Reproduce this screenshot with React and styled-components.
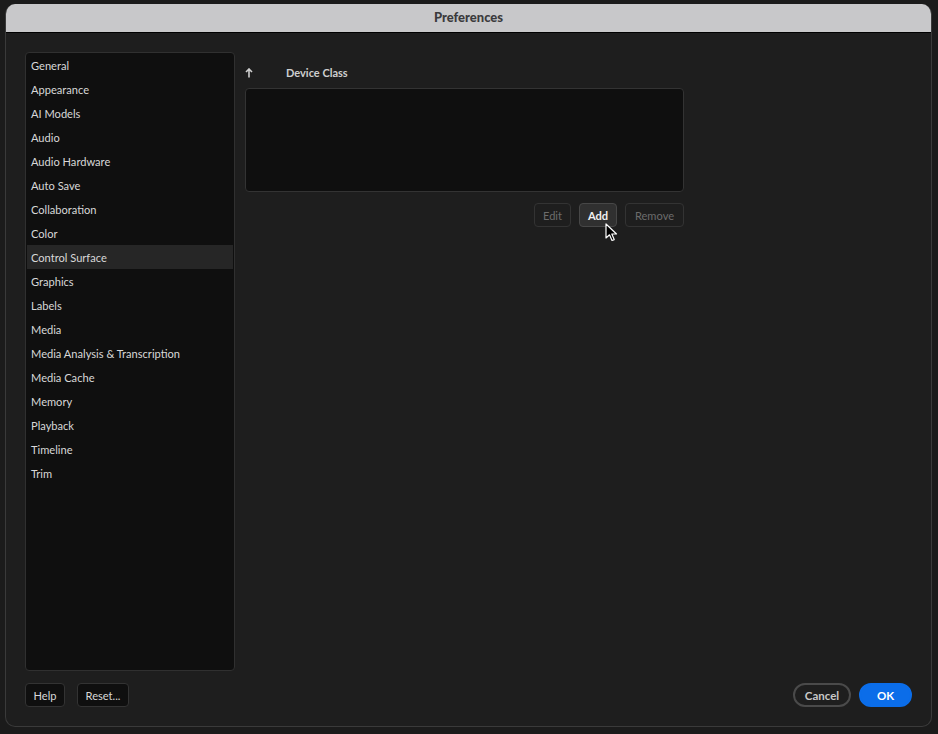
import React from "react";
import styled, { createGlobalStyle } from "styled-components";

const GlobalStyle = createGlobalStyle`
  html, body {
    margin: 0;
    padding: 0;
    background: #1b1b1b;
    font-family: "Lato", "Noto Sans", "Liberation Sans", sans-serif;
  }
`;

const Screen = styled.div`
  width: 938px;
  height: 734px;
  padding: 4px 6px 7px 5px;
  box-sizing: border-box;
  position: relative;
`;

const Window = styled.div`
  height: 100%;
  display: flex;
  flex-direction: column;
  background: #1e1e1e;
  border: 1px solid #3a3a3a;
  border-top: none;
  border-radius: 10px;
  overflow: hidden;
  box-sizing: border-box;
`;

const TitleBar = styled.div`
  height: 29px;
  flex: none;
  display: flex;
  align-items: center;
  justify-content: center;
  padding-bottom: 3px;
  box-sizing: border-box;
  background: #c8c8ca;
  border-bottom: 1px solid #000;
  color: #3b3b3d;
  font-size: 13px;
  font-weight: 900;
`;

const Body = styled.div`
  flex: 1;
  display: flex;
  flex-direction: column;
  padding: 19px 19px 19px 19px;
  min-height: 0;
`;

const Main = styled.div`
  flex: 1;
  display: flex;
  gap: 10px;
  min-height: 0;
`;

const Sidebar = styled.ul`
  width: 210px;
  flex: none;
  margin: 0;
  padding: 0 1px;
  list-style: none;
  background: #0f0f0f;
  border: 1px solid #303030;
  border-radius: 4px;
  box-sizing: border-box;
`;

const NavItem = styled.li`
  height: 24px;
  display: flex;
  align-items: center;
  padding-left: 4px;
  font-size: 11.1px;
  color: #d8d8d8;
  background: ${(p) => (p.$active ? "#262626" : "transparent")};
`;

const Panel = styled.div`
  width: 439px;
  display: flex;
  flex-direction: column;
`;

const ColumnHeader = styled.div`
  height: 36px;
  display: flex;
  align-items: center;
  padding-top: 5px;
  box-sizing: border-box;
`;

const SortArrow = styled.span`
  width: 41px;
  display: flex;
  align-items: center;
`;

const HeaderLabel = styled.span`
  font-size: 11px;
  font-weight: 700;
  color: #cfcfcf;
`;

const ListBox = styled.div`
  height: 104px;
  background: #0f0f0f;
  border: 1px solid #333;
  border-radius: 4px;
  box-sizing: border-box;
`;

const ButtonRow = styled.div`
  display: flex;
  justify-content: flex-end;
  gap: 8px;
  margin-top: 11px;
`;

const SmallButton = styled.button`
  height: 24px;
  padding: 0;
  width: ${(p) => p.$w}px;
  font-family: inherit;
  font-size: 11.1px;
  font-weight: ${(p) => (p.$hover ? 700 : 400)};
  color: ${(p) => (p.$disabled ? "#6c6c6c" : p.$hover ? "#f0f0f0" : "#d8d8d8")};
  background: ${(p) => (p.$hover ? "#303030" : p.$disabled ? "#1e1e1e" : "#0f0f0f")};
  border: 1px solid ${(p) => (p.$hover ? "#474747" : "#333")};
  border-radius: 4px;
  box-sizing: border-box;
`;

const Footer = styled.div`
  flex: none;
  display: flex;
  align-items: center;
  margin-top: 12px;
`;

const FooterGroup = styled.div`
  display: flex;
  margin-left: ${(p) => (p.$right ? "auto" : 0)};
  gap: ${(p) => (p.$right ? 8 : 12)}px;
`;

const PillButton = styled.button`
  height: 24px;
  padding: 0;
  font-family: inherit;
  font-size: 11.5px;
  font-weight: 700;
  border-radius: 12px;
  box-sizing: border-box;
  width: ${(p) => p.$w}px;
  color: ${(p) => (p.$primary ? "#fff" : "#c8c8c8")};
  background: ${(p) => (p.$primary ? "#0b6de9" : "transparent")};
  border: 2px solid ${(p) => (p.$primary ? "#0b6de9" : "#4a4a4a")};
`;

const Cursor = styled.svg`
  position: absolute;
  left: 605px;
  top: 223px;
`;

const sections = [
  "General",
  "Appearance",
  "AI Models",
  "Audio",
  "Audio Hardware",
  "Auto Save",
  "Collaboration",
  "Color",
  "Control Surface",
  "Graphics",
  "Labels",
  "Media",
  "Media Analysis & Transcription",
  "Media Cache",
  "Memory",
  "Playback",
  "Timeline",
  "Trim",
];

export default function App() {
  return (
    <Screen>
      <GlobalStyle />
      <Window>
        <TitleBar>Preferences</TitleBar>
        <Body>
          <Main>
            <Sidebar>
              {sections.map((s) => (
                <NavItem key={s} $active={s === "Control Surface"}>
                  {s}
                </NavItem>
              ))}
            </Sidebar>
            <Panel>
              <ColumnHeader>
                <SortArrow>
                  <svg width="8" height="10" viewBox="0 0 8 10">
                    <path d="M4 1 L4 9.5 M1 4 L4 1 L7 4" stroke="#d0d0d0" strokeWidth="1.6" fill="none" />
                  </svg>
                </SortArrow>
                <HeaderLabel>Device Class</HeaderLabel>
              </ColumnHeader>
              <ListBox />
              <ButtonRow>
                <SmallButton $disabled $w={37}>Edit</SmallButton>
                <SmallButton $hover $w={38}>Add</SmallButton>
                <SmallButton $disabled $w={59}>Remove</SmallButton>
              </ButtonRow>
            </Panel>
          </Main>
          <Footer>
            <FooterGroup>
              <SmallButton $w={40}>Help</SmallButton>
              <SmallButton $w={52}>Reset...</SmallButton>
            </FooterGroup>
            <FooterGroup $right>
              <PillButton $w={58}>Cancel</PillButton>
              <PillButton $primary $w={53}>OK</PillButton>
            </FooterGroup>
          </Footer>
        </Body>
      </Window>
      <Cursor width="13" height="19" viewBox="0 0 13 19">
        <path d="M1 1 L1 15 L4.5 11.8 L7 17.5 L9.2 16.6 L6.8 11 L11.5 11 Z" fill="#000" stroke="#fff" strokeWidth="1.2" strokeLinejoin="round" />
      </Cursor>
    </Screen>
  );
}
